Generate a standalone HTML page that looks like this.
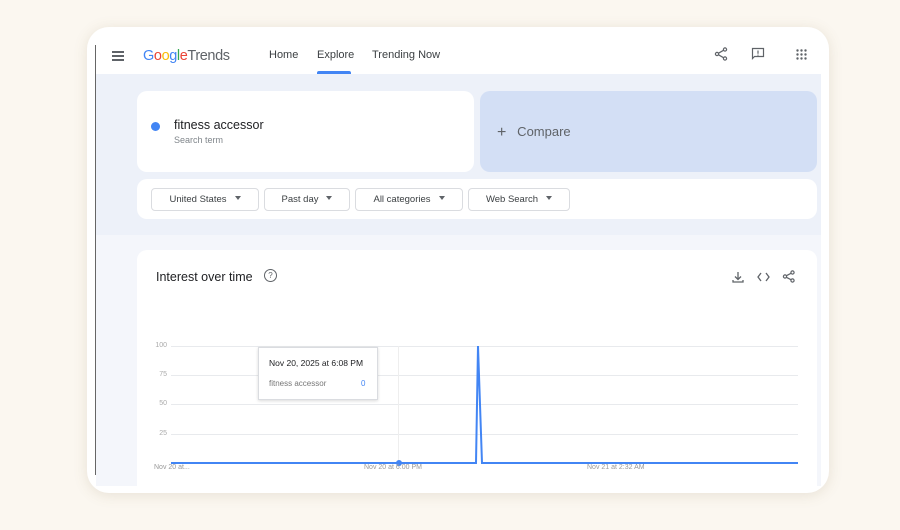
<!DOCTYPE html><html><head><style>
body{margin:0;width:900px;height:530px;background:#fbf7f0;font-family:"Liberation Sans",sans-serif;position:relative;overflow:hidden}
.frame{position:absolute;left:87px;top:27px;width:742px;height:466px;background:#fff;border-radius:22px;box-shadow:0 2px 14px rgba(120,100,60,.15);overflow:hidden}
.lb{position:absolute;left:8px;top:18px;width:1px;height:430px;background:#666}
.abs{position:absolute}
.nav{font-size:11px;color:#3c4043}
.blue{position:absolute;left:9px;top:47px;width:725px;height:161px;background:#edf1f9}
.low{position:absolute;left:9px;top:208px;width:725px;height:251px;background:#f4f6fb}
.card{position:absolute;background:#fff;border-radius:10px}
.dd{position:absolute;top:161px;height:21px;border:1px solid #dadce0;border-radius:4px;background:#fff;font-size:9.5px;color:#3c4043;line-height:21px;text-align:center}
.dd:after{content:"";display:inline-block;margin-left:8px;border:3.5px solid transparent;border-top:4px solid #5f6368;vertical-align:-1px}
.gl{position:absolute;left:84px;width:627px;height:1px;background:#e8eaed}
.yl{position:absolute;left:54px;font-size:7px;color:#aaa;width:26px;text-align:right}
.xl{position:absolute;top:437px;font-size:7px;color:#999}
</style></head><body>
<div class="frame">
<div class="blue"></div><div class="low"></div>
<div class="lb"></div>
<div class="abs" style="left:25px;top:24px;width:12px;height:2px;background:#5f6368;box-shadow:0 4px 0 #5f6368,0 8px 0 #5f6368"></div>
<div class="abs" style="left:56px;top:21px;font-size:14.5px;letter-spacing:-.4px"><span style="color:#4285f4">G</span><span style="color:#ea4335">o</span><span style="color:#fbbc05">o</span><span style="color:#4285f4">g</span><span style="color:#34a853">l</span><span style="color:#ea4335">e</span><span style="color:#5f6368">Trends</span></div>
<div class="abs nav" style="left:182px;top:22px">Home</div>
<div class="abs nav" style="left:230px;top:22px">Explore</div>
<div class="abs" style="left:230px;top:44px;width:34px;height:3px;background:#4285f4;border-radius:2px 2px 0 0"></div>
<div class="abs nav" style="left:285px;top:22px">Trending Now</div>
<svg class="abs" style="left:627px;top:20px" width="14" height="14" viewBox="0 0 14 14" fill="none" stroke="#5f6368" stroke-width="1.2"><circle cx="11" cy="2.5" r="1.6"/><circle cx="3" cy="7" r="1.6"/><circle cx="11" cy="11.5" r="1.6"/><path d="M4.5 6.2L9.5 3.3M4.5 7.8l5 2.9"/></svg>
<svg class="abs" style="left:664px;top:20px" width="14" height="14" viewBox="0 0 14 14" fill="none" stroke="#5f6368" stroke-width="1.2"><path d="M1.5 1.5h11v8h-9l-2 2z"/><path d="M7 3.5v3.2M7 7.6v1"/></svg>
<svg class="abs" style="left:709px;top:22px" width="11" height="11" fill="#5f6368"><circle cx="1.5" cy="1.5" r="1.2"/><circle cx="5.5" cy="1.5" r="1.2"/><circle cx="9.5" cy="1.5" r="1.2"/><circle cx="1.5" cy="5.5" r="1.2"/><circle cx="5.5" cy="5.5" r="1.2"/><circle cx="9.5" cy="5.5" r="1.2"/><circle cx="1.5" cy="9.5" r="1.2"/><circle cx="5.5" cy="9.5" r="1.2"/><circle cx="9.5" cy="9.5" r="1.2"/></svg>
<div class="card" style="left:50px;top:64px;width:337px;height:81px"></div>
<div class="abs" style="left:64px;top:95px;width:9px;height:9px;border-radius:50%;background:#4285f4"></div>
<div class="abs" style="left:87px;top:91px;font-size:12.5px;color:#202124">fitness accessor</div>
<div class="abs" style="left:87px;top:108px;font-size:9px;color:#80868b">Search term</div>
<div class="card" style="left:393px;top:64px;width:337px;height:81px;background:#d3dff5"></div>
<div class="abs" style="left:410px;top:97px;font-size:13px;color:#5f6368"><span style="font-size:16px;vertical-align:-1px">+</span>&nbsp;&nbsp; Compare</div>
<div class="card" style="left:50px;top:152px;width:680px;height:40px"></div>
<div class="dd" style="left:64px;width:106px">United States</div>
<div class="dd" style="left:177px;width:84px">Past day</div>
<div class="dd" style="left:268px;width:106px">All categories</div>
<div class="dd" style="left:381px;width:100px">Web Search</div>
<div class="card" style="left:50px;top:223px;width:680px;height:236px;border-radius:10px 10px 0 0"></div>
<div class="abs" style="left:69px;top:243px;font-size:12.5px;color:#202124">Interest over time</div>
<div class="abs" style="left:177px;top:242px;width:11px;height:11px;border:1.2px solid #5f6368;border-radius:50%;font-size:8px;color:#5f6368;text-align:center;line-height:11px">?</div>
<svg class="abs" style="left:645px;top:244px" width="12" height="12" fill="none" stroke="#5f6368" stroke-width="1.3"><path d="M6 1v7M3 5.5l3 3 3-3M1 9v2h10V9"/></svg>
<svg class="abs" style="left:670px;top:245px" width="13" height="10" fill="none" stroke="#5f6368" stroke-width="1.3"><path d="M4 1L1 5l3 4M9 1l3 4-3 4"/></svg>
<svg class="abs" style="left:695px;top:243px" width="13" height="13" fill="none" stroke="#5f6368" stroke-width="1.2"><circle cx="10.5" cy="2.5" r="1.6"/><circle cx="3" cy="6.5" r="1.6"/><circle cx="10.5" cy="10.5" r="1.6"/><path d="M4.4 5.7L9 3.3M4.4 7.3L9 9.7"/></svg>
<div class="gl" style="top:319px"></div><div class="gl" style="top:348px"></div><div class="gl" style="top:377px"></div><div class="gl" style="top:407px"></div>
<div class="yl" style="top:315px">100</div><div class="yl" style="top:344px">75</div><div class="yl" style="top:373px">50</div><div class="yl" style="top:403px">25</div>
<div class="abs" style="left:311px;top:319px;width:1px;height:118px;background:#eee"></div>
<svg class="abs" style="left:84px;top:316px" width="630" height="125"><polyline points="0,120 305,120 307,3 311,120 627,120" fill="none" stroke="#4285f4" stroke-width="2"/><circle cx="228" cy="120" r="3" fill="#4285f4"/></svg>
<div class="abs" style="left:171px;top:320px;width:118px;height:51px;background:#fff;border:1px solid #dadce0;box-shadow:0 1px 3px rgba(0,0,0,.15)"></div>
<div class="abs" style="left:182px;top:331px;font-size:8.5px;color:#202124">Nov 20, 2025 at 6:08 PM</div>
<div class="abs" style="left:182px;top:352px;font-size:8px;color:#777">fitness accessor</div>
<div class="abs" style="left:274px;top:352px;font-size:8px;color:#4285f4">0</div>
<div class="xl" style="left:67px">Nov 20 at...</div>
<div class="xl" style="left:277px">Nov 20 at 6:00 PM</div>
<div class="xl" style="left:500px">Nov 21 at 2:32 AM</div>
</div>
</body></html>
